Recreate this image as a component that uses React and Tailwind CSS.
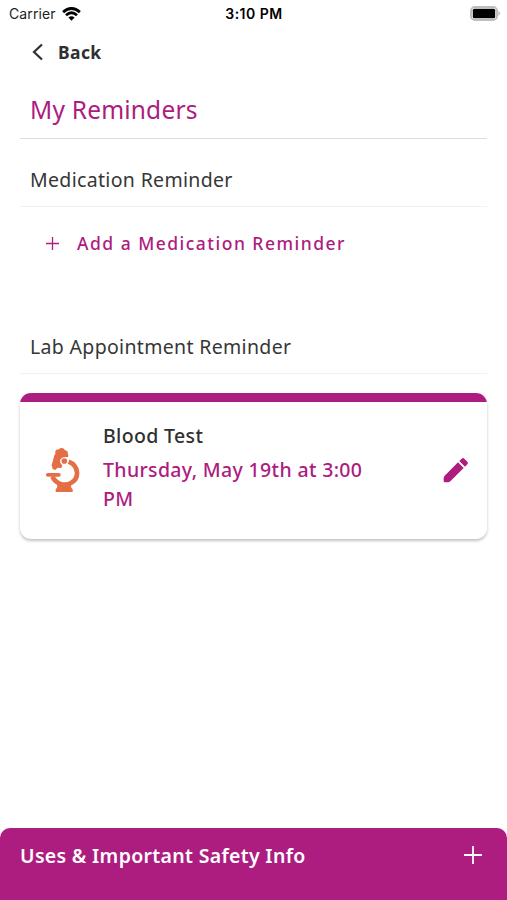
import React from 'react';

const WifiIcon = () => (
    <svg width="19" height="14" viewBox="0 0 19 14" fill="none" stroke="#000" strokeWidth="2.8">
        <path d="M1.1 5.1 Q9.5 -2.2 17.9 5.1" />
        <path d="M4 8.2 Q9.5 3.3 15 8.2" />
        <path d="M9.5 13.7 L6.4 10.6 Q9.5 8 12.6 10.6 Z" fill="#000" stroke="none" />
    </svg>
);

const BatteryIcon = () => (
    <svg width="31" height="15" viewBox="0 0 31 15">
        <rect x="1" y="1" width="26" height="13" rx="4" fill="#fff" stroke="#bdbdbd" strokeWidth="2" />
        <rect x="2.8" y="2.8" width="22.4" height="9.4" rx="1.5" fill="#000" />
        <path d="M28.4 4.8 Q31.6 7.4 28.4 10 Z" fill="#b8b8b8" />
    </svg>
);

const MicroscopeIcon = () => (
    <svg width="35" height="47" viewBox="30 35 105 141" fill="#e56f45">
        {/* Eyepiece and tube */}
        <path d="M64 43 L72 42 L75 39 Q81 36 87 40 L89 44 L95 46 Q100 48 98 53 L100 59 L99 66 Q82 62 75 75 Q74 85 82 91 L79 98 L70 97 Q64 98 61 104 L54 102 Q50 98 52 94 L50 91 Q49 87 52 83 L58 60 L61 56 Q59 47 64 43 Z" />
        <circle cx="88" cy="77" r="8.5" />
        {/* Arm */}
        <path d="M101 79 C133 92 132 128 111 141 C90 155 64 147 52 124" fill="none" stroke="#e56f45" strokeWidth="14" />
        {/* Stage and base */}
        <rect x="33" y="113" width="44" height="11" rx="5" />
        <path d="M66 147 L109 147 Q106 157 113 162 L113 170 L62 170 L62 162 Q69 157 66 147 Z" />
    </svg>
);

const PencilIcon = () => (
    <svg width="26" height="26" viewBox="0 0 78 78" fill="#ad1c7f">
        <path d="M2 64 Q2 59 5 56 L45 16 L62 33 L22 73 Q19 76 14 76 L6 76 Q2 76 2 72 Z" />
        <path d="M49 12 L56 5 Q60 1 64 5 L73 14 Q77 18 73 22 L66 29 Z" />
    </svg>
);

const PlusIcon = ({ size, color, strokeWidth }) => (
    <svg width={size} height={size} viewBox="0 0 20 20" stroke={color} strokeWidth={strokeWidth}>
        <path d="M10 0 V20 M0 10 H20" />
    </svg>
);

const StatusBar = () => (
    <div className="flex h-[27px] items-center justify-between pl-[9px] pr-[6px] font-['Inter',sans-serif] text-[14px] text-[#222]">
        <div className="flex w-[216px] items-center gap-[6px]">
            <span className="tracking-[0.1px]">Carrier</span>
            <WifiIcon />
        </div>
        <span className="mr-[2px] whitespace-nowrap text-[14px] font-semibold tracking-[0.5px] text-black">3:10 PM</span>
        <div className="flex w-[216px] justify-end">
            <BatteryIcon />
        </div>
    </div>
);

const SectionTitle = ({ children }) => (
    <h2 className="mx-5 h-[54px] border-b border-[#f1f1f1] pl-[10px] text-[19.5px] leading-[54px] tracking-[0.33px]">
        {children}
    </h2>
);

const ReminderCard = ({ title, date }) => (
    <div className="mx-5 mt-[19px] flex h-[146px] flex-col overflow-hidden rounded-[11px] bg-white shadow-[0_2px_3px_rgba(0,0,0,0.24)]">
        <div className="h-[9px] bg-[#ad1c7f]" />
        <div className="flex flex-1 items-center pl-[25px] pr-[18px]">
            <MicroscopeIcon />
            <div className="mb-[7px] ml-[23px] w-[290px] tracking-[0.35px]">
                <h3 className="text-[19.5px] font-medium leading-[29px] text-[#303030]">{title}</h3>
                <p className="mt-[5px] text-[19.5px] font-medium leading-[29px] text-[#ad1c7f]">{date}</p>
            </div>
            <button className="mb-[2px] ml-auto" aria-label="Edit">
                <PencilIcon />
            </button>
        </div>
    </div>
);

export default function App() {
    return (
        <div className="flex h-[900px] w-[507px] flex-col overflow-hidden bg-white font-['Noto_Sans',sans-serif] text-[#363636]">
            <StatusBar />

            <button className="mt-px flex h-[48px] items-center pl-[32px] text-left">
                <svg width="12" height="18" viewBox="0 0 12 18" fill="none" stroke="#303030" strokeWidth="2.2">
                    <path d="M10 1.5 L2 9 L10 16.5" />
                </svg>
                <span className="ml-[14px] text-[17.5px] font-bold tracking-[0.4px] text-[#303030]">Back</span>
            </button>

            <h1 className="mx-5 h-[63px] border-b border-[#dedede] pl-[10px] text-[24.5px] leading-[67px] tracking-[0.2px] text-[#ad1c7f]">
                My Reminders
            </h1>

            <div className="mt-[14px]">
                <SectionTitle>Medication Reminder</SectionTitle>
                <button className="flex h-[73px] items-center pl-[46px]">
                    <PlusIcon size={13} color="#ad1c7f" strokeWidth={2} />
                    <span className="ml-[18px] text-[17.5px] font-medium tracking-[1.48px] text-[#ad1c7f]">Add a Medication Reminder</span>
                </button>
            </div>

            <div className="mt-[40px]">
                <SectionTitle>Lab Appointment Reminder</SectionTitle>
                <ReminderCard title="Blood Test" date="Thursday, May 19th at 3:00 PM" />
            </div>

            <footer className="mt-auto flex h-[72px] items-start justify-between rounded-t-[10px] bg-[#ad1c7f] pl-[20px] pr-[25px] text-white">
                <span className="text-[19.5px] font-semibold leading-[55px] tracking-[0.32px]">Uses &amp; Important Safety Info</span>
                <span className="mt-[18px]">
                    <PlusIcon size={18} color="#fff" strokeWidth={2} />
                </span>
            </footer>
        </div>
    );
}
